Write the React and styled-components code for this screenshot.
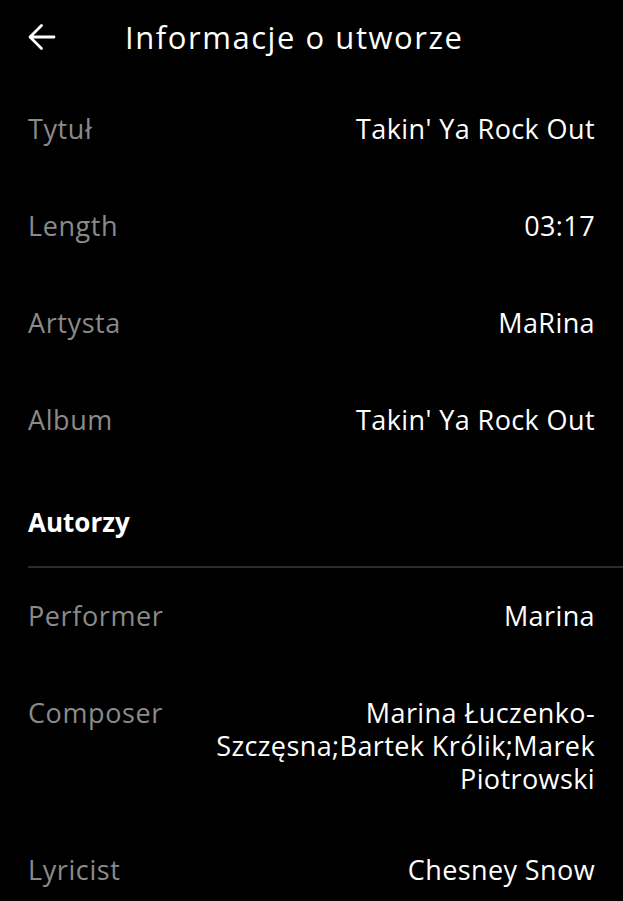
import React from "react";
import styled, { createGlobalStyle } from "styled-components";

const Global = createGlobalStyle`
  html, body { margin: 0; padding: 0; background: #000; }
  body { font-family: "Open Sans", "Noto Sans", sans-serif; color: #fff; }
`;

const Page = styled.div`
  width: 623px;
  min-height: 901px;
  background: #000;
  overflow: hidden;
`;

const Header = styled.header`
  height: 81px;
  box-sizing: border-box;
  display: flex;
  align-items: center;
  padding: 0 28px 8px;
  gap: 69px;
`;

const BackIcon = styled.svg`
  width: 28px;
  height: 28px;
  flex: none;
`;

const Title = styled.h1`
  margin: 0;
  font-size: 31px;
  font-weight: 400;
  letter-spacing: 1.55px;
  color: #fff;
`;

const Row = styled.div`
  display: flex;
  justify-content: space-between;
  align-items: flex-start;
  box-sizing: border-box;
  min-height: 97px;
  padding: 31px 28px 27px;
  font-size: 27px;
  line-height: 33px;
  letter-spacing: 0.4px;
  gap: 24px;
`;

const Label = styled.span`
  color: #8a8a8a;
  flex: none;
  letter-spacing: 0.6px;
`;

const Value = styled.span`
  color: #fff;
  text-align: right;
  max-width: ${(p) => p.$max || 420}px;
`;

const Section = styled.div`
  height: 97px;
  display: flex;
  align-items: center;
  padding: 8px 28px 0;
  box-sizing: border-box;
  font-size: 26px;
  font-weight: 700;
  color: #fff;
`;

const Divider = styled.div`
  height: 2px;
  margin-left: 28px;
  background: #2c2c2c;
`;

const info = [
  ["Tytuł", "Takin' Ya Rock Out"],
  ["Length", "03:17"],
  ["Artysta", "MaRina"],
  ["Album", "Takin' Ya Rock Out"],
];

const authors = [
  ["Performer", "Marina"],
  ["Composer", "Marina Łuczenko-Szczęsna;Bartek Królik;Marek Piotrowski", 392],
  ["Lyricist", "Chesney Snow"],
];

export default function App() {
  return (
    <Page>
      <Global />
      <Header>
        <BackIcon viewBox="0 0 28 28" fill="none" stroke="#fff" strokeWidth="2.8" strokeLinecap="round" strokeLinejoin="round">
          <path d="M26 14H2.5M13.5 2.5L2 14l11.5 11.5" />
        </BackIcon>
        <Title>Informacje o utworze</Title>
      </Header>
      {info.map(([l, v]) => (
        <Row key={l}>
          <Label>{l}</Label>
          <Value>{v}</Value>
        </Row>
      ))}
      <Section>Autorzy</Section>
      <Divider />
      {authors.map(([l, v, m]) => (
        <Row key={l}>
          <Label>{l}</Label>
          <Value $max={m}>{v}</Value>
        </Row>
      ))}
    </Page>
  );
}
